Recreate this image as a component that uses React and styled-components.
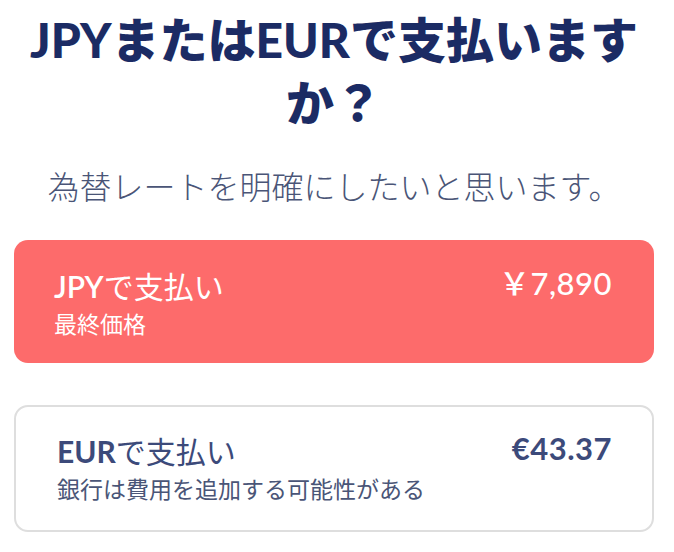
import React from 'react'
import styled, { createGlobalStyle } from 'styled-components'

const GlobalStyle = createGlobalStyle`
  body {
    margin: 0;
    background: #ffffff;
    font-family: Lato, "Noto Sans CJK JP", sans-serif;
  }
`

const Main = styled.main`
  display: flex;
  flex-direction: column;
  padding: 8px 20px 0 14px;
`
const Header = styled.h1`
  margin: 0;
  font-family: Lato, "Noto Sans CJK JP", sans-serif;
  font-weight: 900;
  font-size: 48px;
  line-height: 63px;
  text-align: center;
  color: #1b2b64;
`
const Lead = styled.p`
  margin: 31px 0 0 0;
  font-size: 32px;
  line-height: 44px;
  font-weight: 300;
  text-align: center;
  color: #4a5577;
`
const Options = styled.div`
  display: flex;
  flex-direction: column;
  gap: 42px;
  margin-top: 31px;
`
const Option = styled.button`
  display: flex;
  justify-content: space-between;
  align-items: flex-start;
  box-sizing: border-box;
  width: 100%;
  padding: ${p => (p.$selected ? '25px 42px 22px 40px' : '23px 40px 24px 41px')};
  border-radius: 14px;
  border: ${p => (p.$selected ? 'none' : '2px solid #dedede')};
  background: ${p => (p.$selected ? '#fd6b6b' : '#ffffff')};
  color: ${p => (p.$selected ? '#ffffff' : '#3c4a7a')};
  font-family: Lato, "Noto Sans CJK JP", sans-serif;
  text-align: left;
  cursor: pointer;
`
const Texts = styled.div`
  display: flex;
  flex-direction: column;
`
const Title = styled.span`
  font-size: 30px;
  line-height: 42px;
  font-weight: 400;
`
const Code = styled.span`
  font-weight: ${p => (p.$selected ? 600 : 700)};
`
const Note = styled.span`
  font-size: 23px;
  line-height: 34px;
  font-weight: 400;
  color: ${p => (p.$selected ? '#ffffff' : '#4a5577')};
`
const Price = styled.span`
  font-size: 31px;
  line-height: 36px;
  font-weight: ${p => (p.$selected ? 500 : 700)};
  letter-spacing: 0.5px;
`

const options = [
  { id: 'jpy', code: 'JPY', title: 'で支払い', note: '最終価格', price: '￥7,890', selected: true },
  { id: 'eur', code: 'EUR', title: 'で支払い', note: '銀行は費用を追加する可能性がある', price: '€43.37', selected: false }
]

export default function App() {
  return (
    <>
      <GlobalStyle />
      <Main>
        <Header>JPYまたはEURで支払いますか？</Header>
        <Lead>為替レートを明確にしたいと思います。</Lead>
        <Options>
          {options.map(o => (
            <Option key={o.id} $selected={o.selected}>
              <Texts>
                <Title>
                  <Code $selected={o.selected}>{o.code}</Code>
                  {o.title}
                </Title>
                <Note $selected={o.selected}>{o.note}</Note>
              </Texts>
              <Price $selected={o.selected}>{o.price}</Price>
            </Option>
          ))}
        </Options>
      </Main>
    </>
  )
}
